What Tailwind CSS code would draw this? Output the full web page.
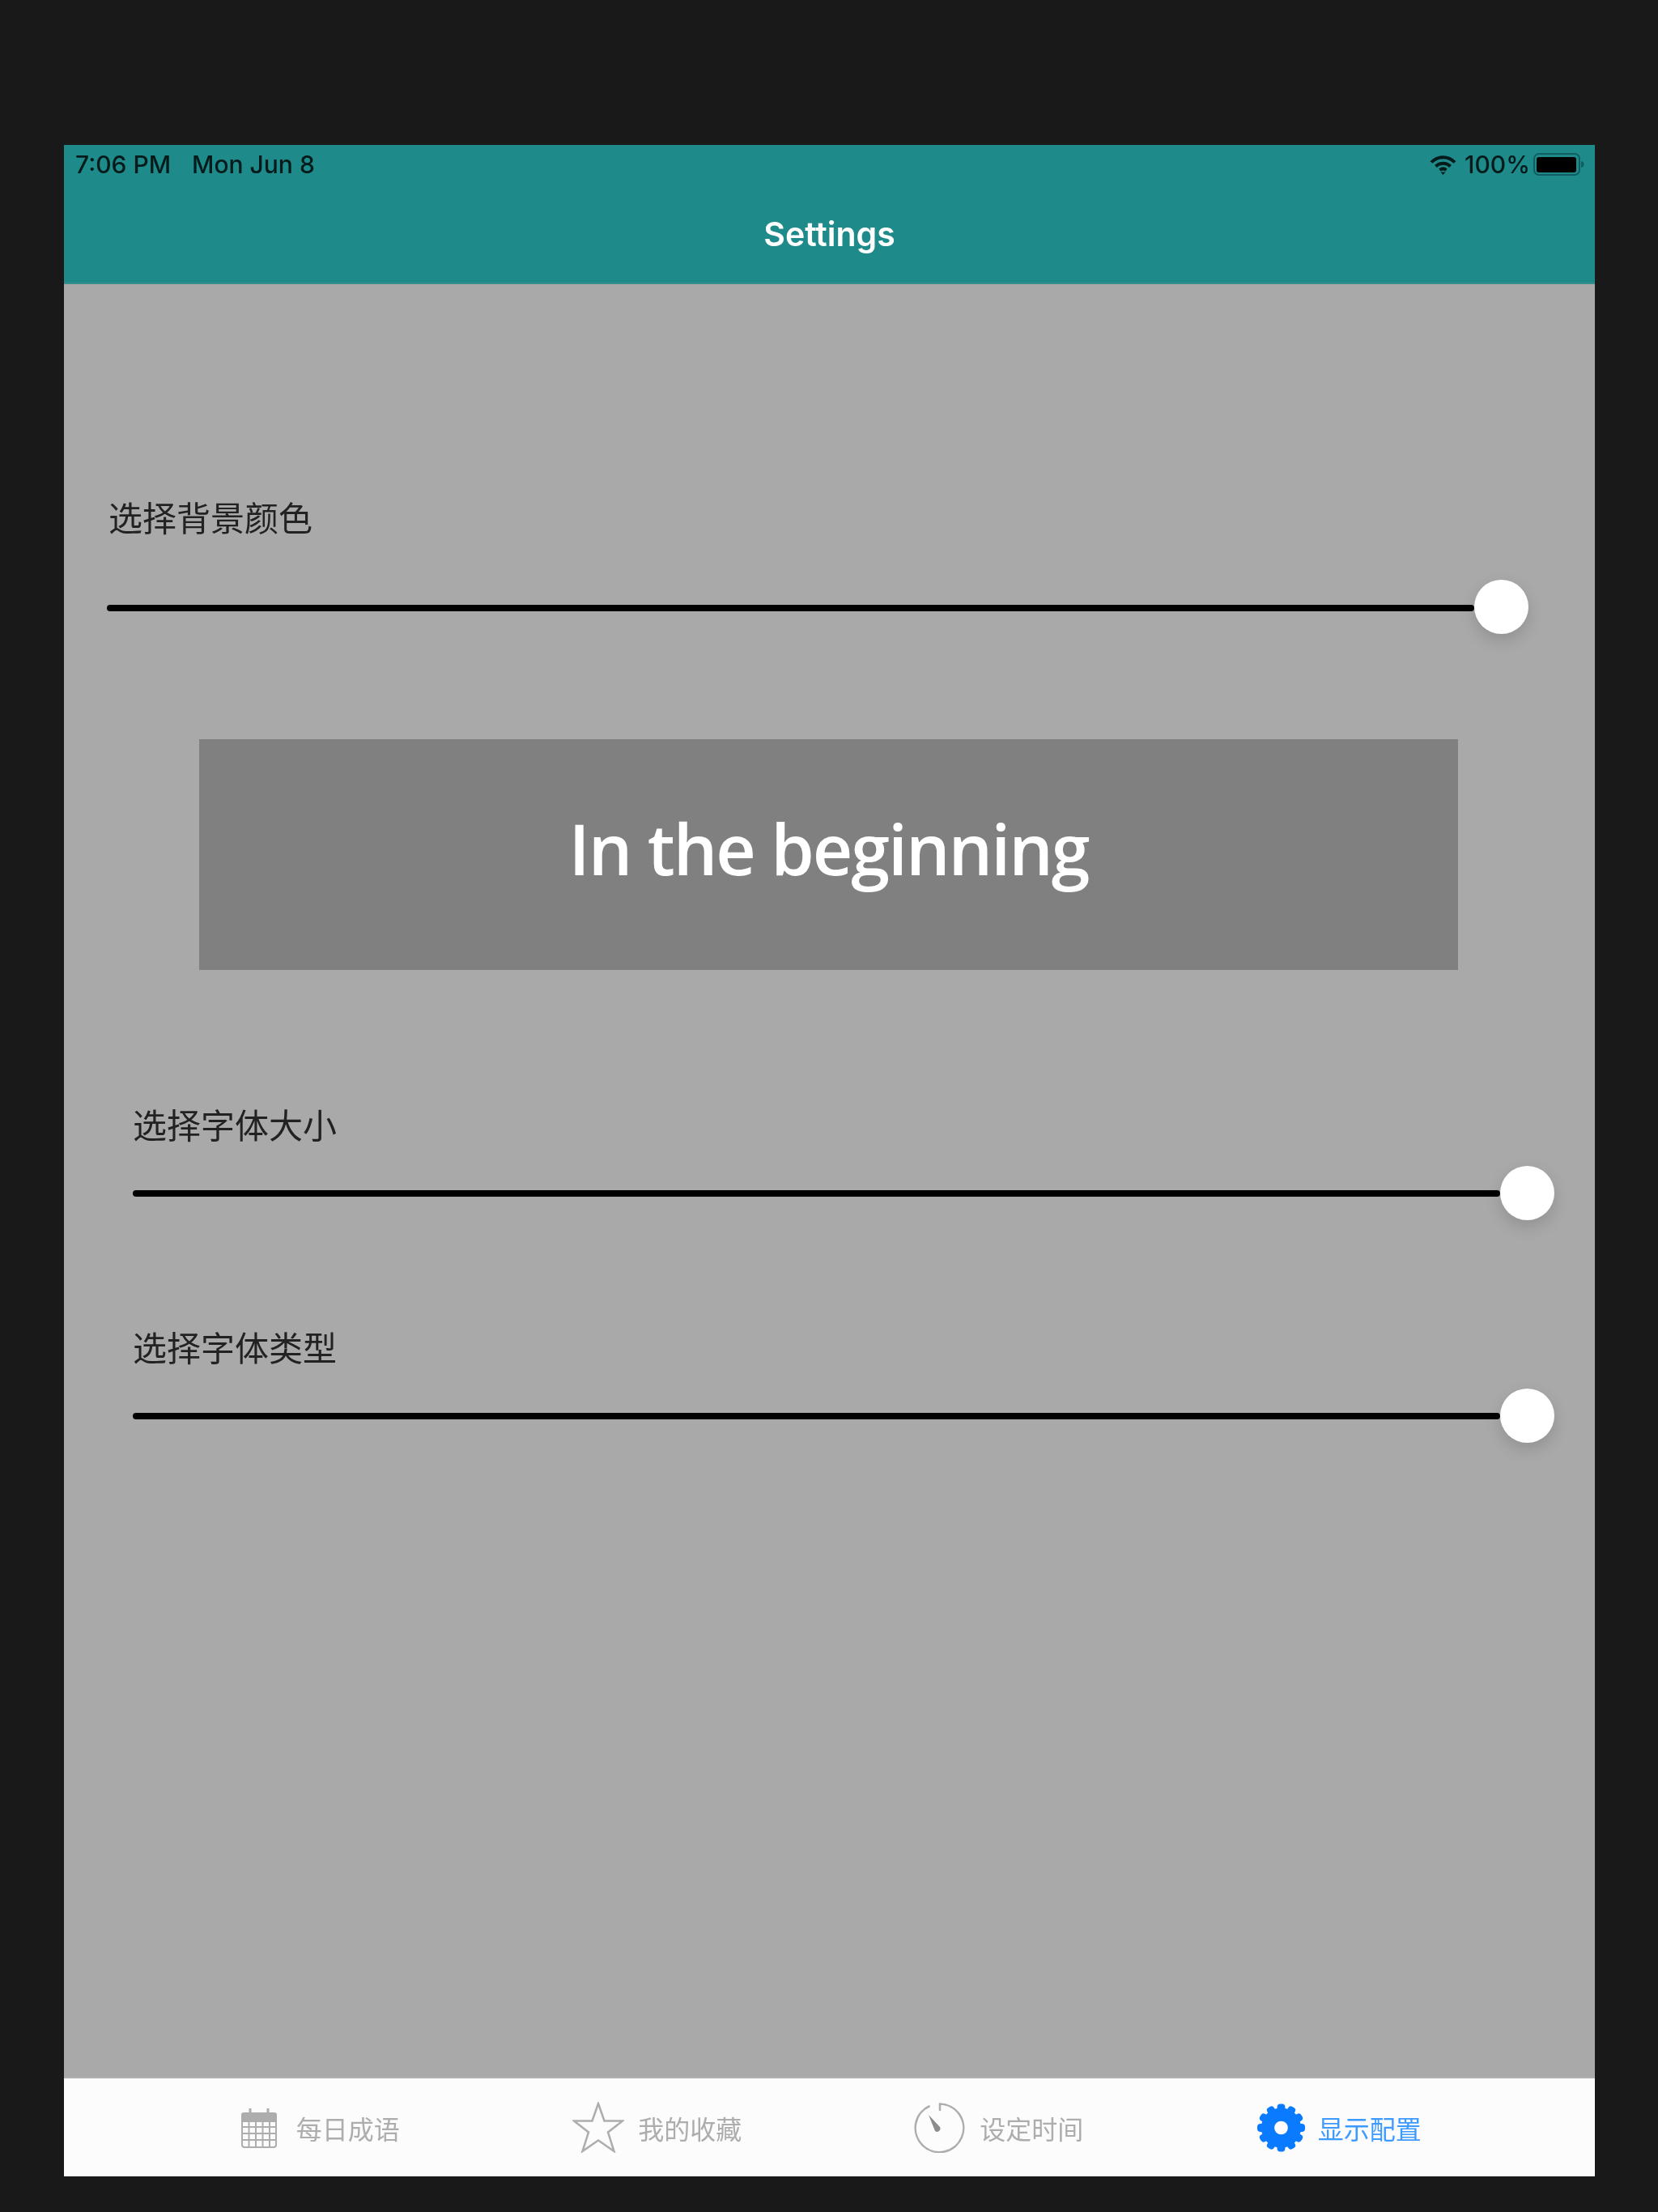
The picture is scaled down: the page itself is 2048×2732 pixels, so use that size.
<!DOCTYPE html>
<html lang="zh-CN">
<head>
  <meta charset="UTF-8" />
  <title>Settings</title>
  <script src="https://cdn.jsdelivr.net/npm/@tailwindcss/browser@4"></script>
</head>
<body class="bg-[#191919] w-[2048px] h-[2732px] overflow-hidden pt-[179px] pl-[79px] font-['Noto_Sans_CJK_SC',sans-serif]">

  <div class="w-[1891px] h-[2509px] flex flex-col blur-[0.7px]">

    <!-- status bar + nav -->
    <header class="h-[172px] shrink-0 bg-[#1e8a8a] border-b-2 border-[#3c8c8c] font-['Inter',sans-serif]">
      <div class="flex items-center h-[48px] pl-[14px] pr-[13px] text-[30px] font-medium text-[#051a1a]">
        <span class="w-[144px]">7:06 PM</span>
        <span>Mon Jun 8</span>
        <div class="ml-auto flex items-center">
          <svg class="w-[33px] h-[25px]" viewBox="0 0 33 25" fill="none" stroke="#051a1a" stroke-width="4">
            <path d="M2 9.500C10 1 23 1 31 9.500" />
            <path d="M7.500 14.500C12.500 9.500 20.500 9.500 25.500 14.500" />
            <path d="M12.500 19C15 17 18 17 20.500 19" />
            <path d="M16.500 25L13.500 21.500H19.500Z" fill="#051a1a" stroke="none" />
          </svg>
          <span class="ml-[10px] w-[85px]">100%</span>
          <svg class="w-[63px] h-[28px]" viewBox="0 0 63 28">
            <rect x="1" y="1" width="56" height="26" rx="6" fill="none" stroke="#0f5f62" stroke-width="2" />
            <rect x="4" y="5" width="49" height="19" rx="3" fill="#000" />
            <path d="M59 10C61.500 10.500 62.500 12 62.500 14C62.500 16 61.500 17.500 59 18Z" fill="#0f5f62" />
          </svg>
        </div>
      </div>
      <h1 class="mt-[37px] text-center text-[41px] leading-[50px] font-semibold text-white">Settings</h1>
    </header>

    <main class="flex-1 bg-[#a9a9a9] text-[42px] leading-[42px] text-[#222]">

      <section class="mt-[266px] ml-[53px] w-[1756px]">
        <p class="pl-[2px]">选择背景颜色</p>
        <div class="mt-[57px] flex items-center">
          <div class="flex-1 h-2 mt-[2px] rounded-full bg-black"></div>
          <div class="w-[67px] h-[67px] rounded-full bg-white shadow-[0_8px_20px_rgba(0,0,0,0.14)]"></div>
        </div>
      </section>

      <div class="mt-[130px] ml-[167px] w-[1555px] h-[285px] bg-[#808080] flex items-center justify-center pb-[16px]">
        <span class="font-['Open_Sans',sans-serif] text-[86px] leading-none tracking-[-2px] font-semibold text-white">In the beginning</span>
      </div>

      <section class="mt-[169px] ml-[85px] w-[1756px]">
        <p>选择字体大小</p>
        <div class="mt-[31px] flex items-center">
          <div class="flex-1 h-2 rounded-full bg-black"></div>
          <div class="w-[67px] h-[67px] rounded-full bg-white shadow-[0_8px_20px_rgba(0,0,0,0.14)]"></div>
        </div>
      </section>

      <section class="mt-[135px] ml-[85px] w-[1756px]">
        <p>选择字体类型</p>
        <div class="mt-[31px] flex items-center">
          <div class="flex-1 h-2 rounded-full bg-black"></div>
          <div class="w-[67px] h-[67px] rounded-full bg-white shadow-[0_8px_20px_rgba(0,0,0,0.14)]"></div>
        </div>
      </section>
    </main>

    <!-- tab bar -->
    <nav class="h-[123px] shrink-0 bg-[#fcfcfc] border-t-2 border-[#b0b0b0] pl-[107px] pr-[106px] grid grid-cols-4 text-[32px] text-[#adadad]">

      <div class="flex items-center justify-center gap-[24px]">
        <svg class="w-[44px] h-[50px]" viewBox="0 0 44 50" fill="none" stroke="#adadad" stroke-width="2">
          <path d="M1 9Q1 7 3 7H41Q43 7 43 9V17H1Z" fill="#adadad" />
          <path d="M11 1V8M33 1V8" stroke-width="3" />
          <rect x="1" y="16" width="42" height="33" rx="3" />
          <path d="M1 24H43M1 32H43M1 40H43M9.500 16V48M18 16V48M26.500 16V48M35 16V48" />
        </svg>
        <span>每日成语</span>
      </div>

      <div class="flex items-center justify-center gap-[17px] pr-[7px]">
        <svg class="w-[64px] h-[63px]" viewBox="0 0 64 63" fill="none" stroke="#adadad" stroke-width="2.500" stroke-linejoin="miter">
          <path d="M32 2L39.500 23.500H62L44 37.500L51.500 61L32 47.500L12.500 61L20 37.500L2 23.500H24.500Z" />
        </svg>
        <span>我的收藏</span>
      </div>

      <div class="flex items-center justify-center gap-[18px] pr-[2px]">
        <svg class="w-[63px] h-[62px]" viewBox="0 0 63 62" fill="none" stroke="#adadad" stroke-width="2.500">
          <path d="M32 10V1.500A29.800 29.800 0 1 1 19.500 4" />
          <path d="M18 15L32 30A4 4 0 0 1 26 35Z" fill="#8c8c8c" stroke="none" />
        </svg>
        <span>设定时间</span>
      </div>

      <div class="flex items-center justify-center gap-[16px] text-[#3d9bff]">
        <svg class="w-[59px] h-[60px]" viewBox="-30 -30 60 60" fill="#0a7aff">
          <circle r="25" />
          <rect x="-5" y="-30" width="10" height="12" rx="4" />
          <rect x="-5" y="-30" width="10" height="12" rx="4" transform="rotate(30)" />
          <rect x="-5" y="-30" width="10" height="12" rx="4" transform="rotate(60)" />
          <rect x="-5" y="-30" width="10" height="12" rx="4" transform="rotate(90)" />
          <rect x="-5" y="-30" width="10" height="12" rx="4" transform="rotate(120)" />
          <rect x="-5" y="-30" width="10" height="12" rx="4" transform="rotate(150)" />
          <rect x="-5" y="-30" width="10" height="12" rx="4" transform="rotate(180)" />
          <rect x="-5" y="-30" width="10" height="12" rx="4" transform="rotate(210)" />
          <rect x="-5" y="-30" width="10" height="12" rx="4" transform="rotate(240)" />
          <rect x="-5" y="-30" width="10" height="12" rx="4" transform="rotate(270)" />
          <rect x="-5" y="-30" width="10" height="12" rx="4" transform="rotate(300)" />
          <rect x="-5" y="-30" width="10" height="12" rx="4" transform="rotate(330)" />
          <circle r="8.500" fill="#fcfcfc" />
        </svg>
        <span>显示配置</span>
      </div>
    </nav>
  </div>
</body>
</html>
